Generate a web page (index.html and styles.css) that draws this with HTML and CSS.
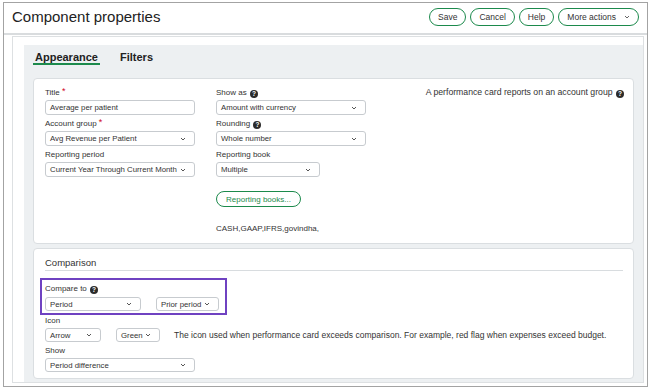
FILE: index.html
```html
<!DOCTYPE html>
<html lang="en">
<head>
    <meta charset="UTF-8">
    <meta name="viewport" content="width=device-width, initial-scale=1.0">
    <title>Component properties</title>
    <link rel="stylesheet" href="styles.css">
</head>
<body>
    <div class="window">
        <div class="header">
            <h1 class="title">Component properties</h1>
            <div class="actions">
                <button class="btn">Save</button>
                <button class="btn">Cancel</button>
                <button class="btn">Help</button>
                <button class="btn">More actions <svg class="chev chev-btn" viewBox="0 0 6 4"><path d="M1 1l2 2 2-2"/></svg></button>
            </div>
        </div>

        <div class="main">
            <div class="panel">
                <div class="sheet">
                    <div class="tabs">
                        <div class="tab active">Appearance</div>
                        <div class="tab">Filters</div>
                    </div>

                    <div class="card card-appearance">
                        <div class="col">
                            <div class="field">
                                <label>Title <span class="req">*</span></label>
                                <div class="input">Average per patient</div>
                            </div>
                            <div class="field">
                                <label>Account group <span class="req">*</span></label>
                                <div class="select">Avg Revenue per Patient <svg class="chev" viewBox="0 0 6 4"><path d="M1 1l2 2 2-2"/></svg></div>
                            </div>
                            <div class="field">
                                <label>Reporting period</label>
                                <div class="select">Current Year Through Current Month <svg class="chev" viewBox="0 0 6 4"><path d="M1 1l2 2 2-2"/></svg></div>
                            </div>
                        </div>

                        <div class="col">
                            <div class="field">
                                <label>Show as <span class="help">?</span></label>
                                <div class="select">Amount with currency <svg class="chev" viewBox="0 0 6 4"><path d="M1 1l2 2 2-2"/></svg></div>
                            </div>
                            <div class="field">
                                <label>Rounding <span class="help">?</span></label>
                                <div class="select">Whole number <svg class="chev" viewBox="0 0 6 4"><path d="M1 1l2 2 2-2"/></svg></div>
                            </div>
                            <div class="field">
                                <label>Reporting book</label>
                                <div class="select w-book">Multiple <svg class="chev" viewBox="0 0 6 4"><path d="M1 1l2 2 2-2"/></svg></div>
                            </div>
                            <button class="btn btn-books">Reporting books...</button>
                            <div class="books">CASH,GAAP,IFRS,govindha,</div>
                        </div>

                        <div class="info">A performance card reports on an account group <span class="help">?</span></div>
                    </div>

                    <div class="card card-comparison">
                        <div class="section-title">Comparison</div>

                        <div class="highlight">
                            <label>Compare to <span class="help">?</span></label>
                            <div class="row">
                                <div class="select sm w-period">Period <svg class="chev" viewBox="0 0 6 4"><path d="M1 1l2 2 2-2"/></svg></div>
                                <div class="select sm w-prior">Prior period <svg class="chev" viewBox="0 0 6 4"><path d="M1 1l2 2 2-2"/></svg></div>
                            </div>
                        </div>

                        <div class="field">
                            <label>Icon</label>
                            <div class="row">
                                <div class="select sm w-arrow">Arrow <svg class="chev" viewBox="0 0 6 4"><path d="M1 1l2 2 2-2"/></svg></div>
                                <div class="select sm w-green">Green <svg class="chev" viewBox="0 0 6 4"><path d="M1 1l2 2 2-2"/></svg></div>
                                <span class="hint">The icon used when performance card exceeds comparison. For example, red flag when expenses exceed budget.</span>
                            </div>
                        </div>

                        <div class="field">
                            <label>Show</label>
                            <div class="select sm w-show">Period difference <svg class="chev" viewBox="0 0 6 4"><path d="M1 1l2 2 2-2"/></svg></div>
                        </div>
                    </div>
                </div>
            </div>
        </div>
    </div>
</body>
</html>
```

FILE: styles.css
```css
* {
    box-sizing: border-box;
}
body {
    margin: 0;
    background: #fff;
    font-family: "Liberation Sans", Arial, sans-serif;
    font-size: 8px;
    color: #333;
}
.window {
    margin: 2px 0 0 3px;
    width: 645px;
    height: 385px;
    border: 1px solid #a3a3a3;
    display: flex;
    flex-direction: column;
}
.header {
    height: 32px;
    display: flex;
    align-items: flex-start;
    justify-content: space-between;
    padding: 5px 8px 0 8px;
    border-bottom: 2px solid #d9dcde;
}
.title {
    margin: 0;
    font-size: 15px;
    font-weight: normal;
    line-height: 18px;
    color: #222;
}
.actions {
    display: flex;
    gap: 4px;
}
.btn {
    height: 18px;
    padding: 0 8px;
    border: 1.5px solid #1c8a4c;
    border-radius: 9px;
    background: #fff;
    color: #333;
    font-family: inherit;
    font-size: 8.5px;
    display: flex;
    align-items: center;
    gap: 8px;
    cursor: pointer;
}
.chev {
    width: 6px;
    height: 4px;
    fill: none;
    stroke: #555;
    stroke-width: 1;
    flex: none;
}
.chev-btn {
    stroke: #666;
}
.main {
    flex: 1;
    display: flex;
    padding: 1px 3px 3px 8px;
}
.panel {
    flex: 1;
    display: flex;
    border: 1px solid #dde0e2;
    background: #fff;
    padding: 8px 0 0 11px;
}
.sheet {
    flex: 1;
    display: flex;
    flex-direction: column;
    background: #edf0f2;
    padding: 6px 9px 3px 9px;
}
.tabs {
    display: flex;
    gap: 18px;
    margin-bottom: 13px;
}
.tab {
    font-size: 11px;
    font-weight: bold;
    line-height: 12px;
    padding: 0 2px;
    color: #222;
    border-bottom: 2px solid transparent;
}
.tab.active {
    border-bottom-color: #1c8a4c;
}
.card {
    background: #fff;
    border: 1px solid #dadee1;
    border-radius: 4px;
}
.card-appearance {
    height: 166px;
    display: grid;
    grid-template-columns: 150px 150px 1fr;
    column-gap: 21px;
    padding: 8px 9px 0 11px;
}
.col {
    display: flex;
    flex-direction: column;
    align-items: flex-start;
}
.field {
    display: flex;
    flex-direction: column;
    align-items: flex-start;
    margin-bottom: 3px;
}
label {
    display: block;
    height: 12px;
    line-height: 12px;
    margin-bottom: 1px;
    color: #333;
}
.req {
    color: #d0021b;
    font-size: 9px;
    line-height: 0;
    vertical-align: 1px;
}
.help {
    display: inline-block;
    width: 8px;
    height: 8px;
    border-radius: 50%;
    background: #2b2b2b;
    color: #fff;
    font-size: 6.5px;
    font-weight: bold;
    line-height: 8px;
    text-align: center;
    margin-left: 1px;
    vertical-align: -1px;
}
.input,
.select {
    width: 150px;
    height: 15px;
    border: 1px solid #c7cbcf;
    border-radius: 3px;
    background: #fff;
    padding: 0 8px 0 4px;
    display: flex;
    align-items: center;
    justify-content: space-between;
    white-space: nowrap;
    font-size: 7.8px;
    color: #333;
}
.select.sm {
    height: 14px;
}
.w-book {
    width: 104px;
}
.btn-books {
    margin-top: 11px;
    height: 16px;
    border-width: 1px;
    color: #1c8a4c;
    font-size: 8px;
    padding: 0 9px;
}
.books {
    margin-top: 16px;
    line-height: 12px;
}
.info {
    text-align: right;
    line-height: 12px;
    margin-top: -1px;
    font-size: 8.7px;
}
.card-comparison {
    flex: 1;
    margin-top: 4px;
    padding: 8px 10px 0 11px;
}
.section-title {
    font-size: 9.5px;
    line-height: 12px;
    padding-bottom: 1px;
    border-bottom: 1px solid #d8dcdf;
    color: #333;
}
.highlight {
    width: max-content;
    margin: 7px 0 0 -5px;
    padding: 3px 6px 2px 3px;
    border: 2px solid #6f42c1;
}
.highlight label {
    margin-bottom: 2px;
}
.row {
    display: flex;
    align-items: center;
    gap: 15px;
}
.w-period {
    width: 96px;
}
.w-prior {
    width: 63px;
}
.w-arrow {
    width: 56px;
}
.w-green {
    width: 44px;
}
.w-show {
    width: 150px;
}
.hint {
    margin-left: -1px;
    white-space: nowrap;
    font-size: 8.5px;
}
```
